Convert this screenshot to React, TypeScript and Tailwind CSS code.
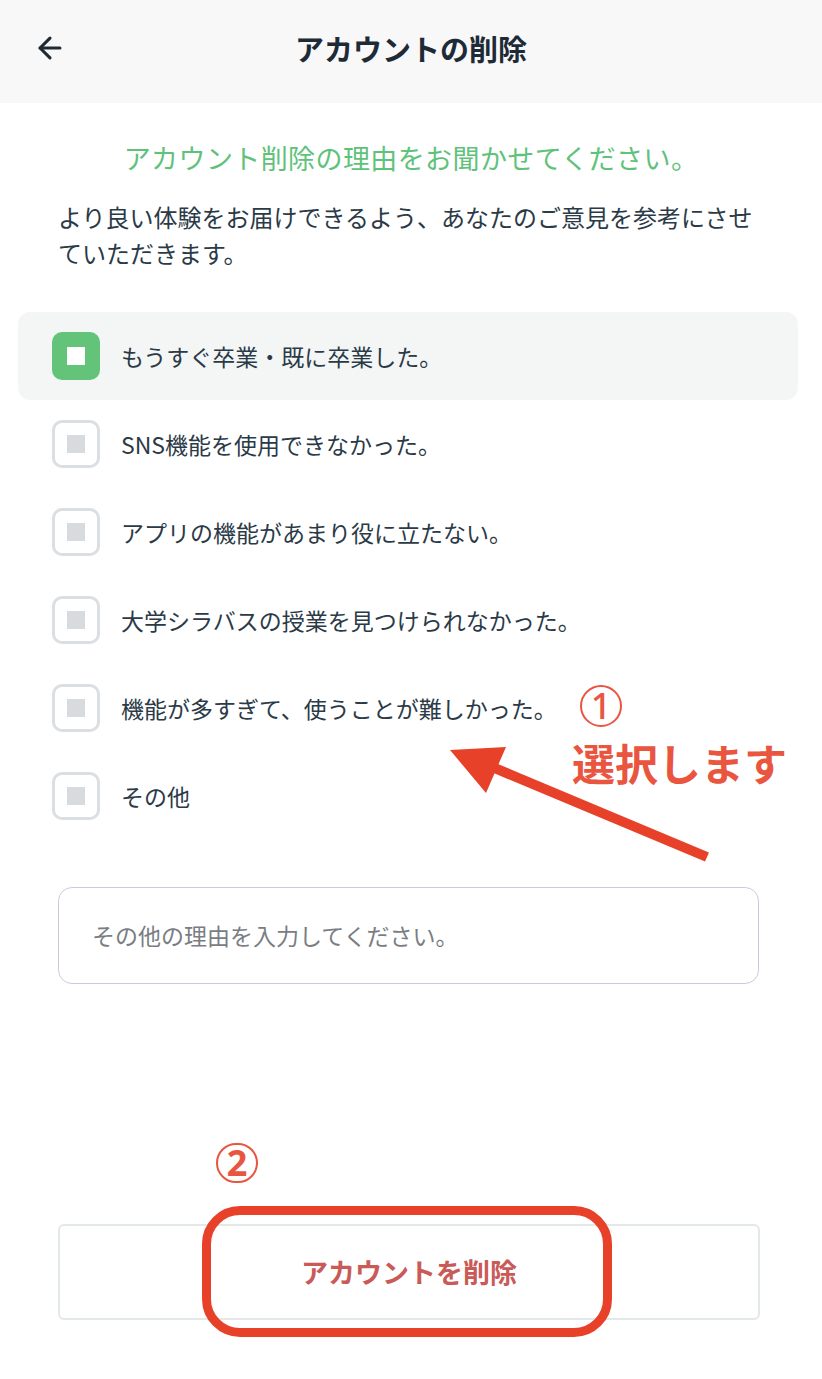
import React from 'react'
import { ArrowLeft } from 'lucide-react'

const reasons = [
  'もうすぐ卒業・既に卒業した。',
  'SNS機能を使用できなかった。',
  'アプリの機能があまり役に立たない。',
  '大学シラバスの授業を見つけられなかった。',
  '機能が多すぎて、使うことが難しかった。',
  'その他',
]

function Checkbox({ checked }: { checked: boolean }) {
  if (checked) {
    return (
      <div className="flex h-[48px] w-[48px] shrink-0 items-center justify-center rounded-[10px] bg-[#63c479]">
        <div className="h-[18px] w-[18px] bg-white" />
      </div>
    )
  }
  return (
    <div className="flex h-[48px] w-[48px] shrink-0 items-center justify-center rounded-[10px] border-[3px] border-[#dcdfe2] bg-white">
      <div className="h-[18px] w-[18px] bg-[#d8dbde]" />
    </div>
  )
}

export default function App() {
  return (
    <div
      className="relative h-[1379px] w-[822px] overflow-hidden bg-white text-[#2b3a47]"
      style={{ fontFamily: '"Noto Sans CJK JP", "Noto Sans", sans-serif' }}
    >
      {/* header */}
      <header className="relative flex h-[103px] items-center justify-center bg-[#f8f8f8] pb-[7px]">
        <ArrowLeft className="absolute left-[33px] top-[31px] h-[34px] w-[34px] text-[#1e2b37]" strokeWidth={2.2} />
        <h1 className="text-[29px] font-semibold leading-none text-[#1e2b37]">アカウントの削除</h1>
      </header>

      <main>
        <h2 className="pt-[35px] text-center text-[27px] leading-[40px] tracking-[0.4px] text-[#5fc27b]">
          アカウント削除の理由をお聞かせてください。
        </h2>
        <p className="mt-[21px] px-[58px] text-[24px] leading-[36px] text-[#2b3a47]">
          より良い体験をお届けできるよう、あなたのご意見を参考にさせていただきます。
        </p>

        <ul className="ml-[18px] mr-[24px] mt-[41px]">
          {reasons.map((r, i) => (
            <li
              key={r}
              className={
                'flex h-[88px] items-center gap-[21px] rounded-[12px] pl-[34px] ' +
                (i === 0 ? 'bg-[#f4f6f6]' : '')
              }
            >
              <Checkbox checked={i === 0} />
              <span className="text-[23px] leading-none">{r}</span>
            </li>
          ))}
        </ul>

        <div className="mx-[58px] mt-[47px] flex h-[97px] w-[701px] items-center rounded-[14px] border border-[#c9cbdd] px-[33px]">
          <span className="text-[23px] text-[#7a7d83]">その他の理由を入力してください。</span>
        </div>

        <button className="ml-[58px] mt-[240px] flex h-[96px] w-[702px] items-center justify-center rounded-[6px] border-2 border-[#e3e8e8] bg-white">
          <span className="text-[27px] font-bold text-[#c95a57]">アカウントを削除</span>
        </button>
      </main>

      {/* annotations */}
      <div className="absolute left-[580px] top-[685px] flex h-[42px] w-[42px] items-center justify-center rounded-full border-2 border-[#e9553f]">
        <span className="font-['Noto_Sans',sans-serif] text-[36px] font-medium leading-none text-[#e9553f]">1</span>
      </div>
      <div className="absolute left-[572px] top-[736px] text-[43px] font-bold leading-[52px] text-[#e9553f]">
        選択します
      </div>
      <svg className="absolute left-0 top-0" width="822" height="1379" viewBox="0 0 822 1379">
        <line x1="707" y1="857" x2="485" y2="764" stroke="#e8412a" strokeWidth="10" />
        <polygon points="450,750 506,747 486,793" fill="#e8412a" />
      </svg>

      <div className="absolute left-[216px] top-[1143px] flex h-[40px] w-[42px] items-center justify-center rounded-full border-2 border-[#e9553f]">
        <span className="font-['Noto_Sans',sans-serif] text-[36px] font-bold leading-none text-[#e9553f]">2</span>
      </div>
      <div className="absolute left-[202px] top-[1206px] h-[131px] w-[410px] rounded-[38px] border-[9px] border-[#e8412a]" />
    </div>
  )
}
